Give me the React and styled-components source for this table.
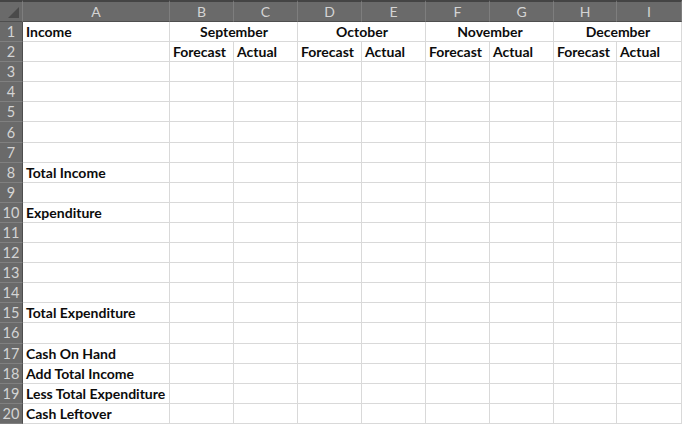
import { Fragment } from "react";
import styled, { createGlobalStyle } from "styled-components";

const GlobalStyle = createGlobalStyle`
  html, body {
    margin: 0;
    padding: 0;
    background: #fff;
    overflow: hidden;
  }
`;

const Sheet = styled.div`
  display: grid;
  grid-template-columns: 23px 147px 64px 64px 64px 64px 64px 64px 63px 65px;
  grid-template-rows: 22px repeat(20, 20.1px);
  width: 682px;
  height: 424px;
  overflow: hidden;
  font-family: Lato, "Liberation Sans", sans-serif;
`;

const Corner = styled.div`
  position: relative;
  background: #6a6a6a;
  border-top: 2px solid #444;
  border-right: 1px solid #7e7e7e;
  border-bottom: 1px solid #4e4e4e;
  box-sizing: border-box;
  &::after {
    content: "";
    position: absolute;
    right: 3px;
    bottom: 3px;
    border-left: 11px solid transparent;
    border-bottom: 11px solid #4a4a4a;
  }
`;

const ColHead = styled.div`
  background: #6a6a6a;
  color: #d4d4d4;
  border-top: 2px solid #444;
  border-right: 1px solid #7e7e7e;
  border-bottom: 1px solid #4e4e4e;
  box-sizing: border-box;
  display: flex;
  align-items: center;
  justify-content: center;
  font-size: 14px;
`;

const RowHead = styled.div`
  background: #6a6a6a;
  color: #d4d4d4;
  border-bottom: 1px solid #808080;
  border-right: 1px solid #4e4e4e;
  box-sizing: border-box;
  display: flex;
  align-items: center;
  justify-content: center;
  font-size: 14.5px;
`;

const Cell = styled.div`
  grid-column: span ${(p) => p.span || 1};
  border-right: 1px solid #d9d9d9;
  border-bottom: 1px solid #d9d9d9;
  box-sizing: border-box;
  display: flex;
  align-items: center;
  justify-content: ${(p) => (p.center ? "center" : "flex-start")};
  padding: 0 2px 0 3px;
  font-size: 14px;
  font-weight: 700;
  color: #0c0c0c;
  white-space: nowrap;
  overflow: visible;
`;

const columns = ["A", "B", "C", "D", "E", "F", "G", "H", "I"];
const months = ["September", "October", "November", "December"];
const labels = {
  1: "Income",
  8: "Total Income",
  10: "Expenditure",
  15: "Total Expenditure",
  17: "Cash On Hand",
  18: "Add Total Income",
  19: "Less Total Expenditure",
  20: "Cash Leftover",
};

function Row({ n }) {
  if (n === 1) {
    return (
      <>
        <RowHead>{n}</RowHead>
        <Cell>{labels[1]}</Cell>
        {months.map((m) => (
          <Cell key={m} span={2} center>
            {m}
          </Cell>
        ))}
      </>
    );
  }
  if (n === 2) {
    return (
      <>
        <RowHead>{n}</RowHead>
        <Cell />
        {months.map((m) => (
          <Fragment key={m}>
            <Cell>Forecast</Cell>
            <Cell>Actual</Cell>
          </Fragment>
        ))}
      </>
    );
  }
  return (
    <>
      <RowHead>{n}</RowHead>
      <Cell>{labels[n] || ""}</Cell>
      {columns.slice(1).map((c) => (
        <Cell key={c} />
      ))}
    </>
  );
}

export default function App() {
  const rows = Array.from({ length: 20 }, (_, i) => i + 1);
  return (
    <>
      <GlobalStyle />
      <Sheet>
        <Corner />
        {columns.map((c) => (
          <ColHead key={c}>{c}</ColHead>
        ))}
        {rows.map((n) => (
          <Row key={n} n={n} />
        ))}
      </Sheet>
    </>
  );
}
